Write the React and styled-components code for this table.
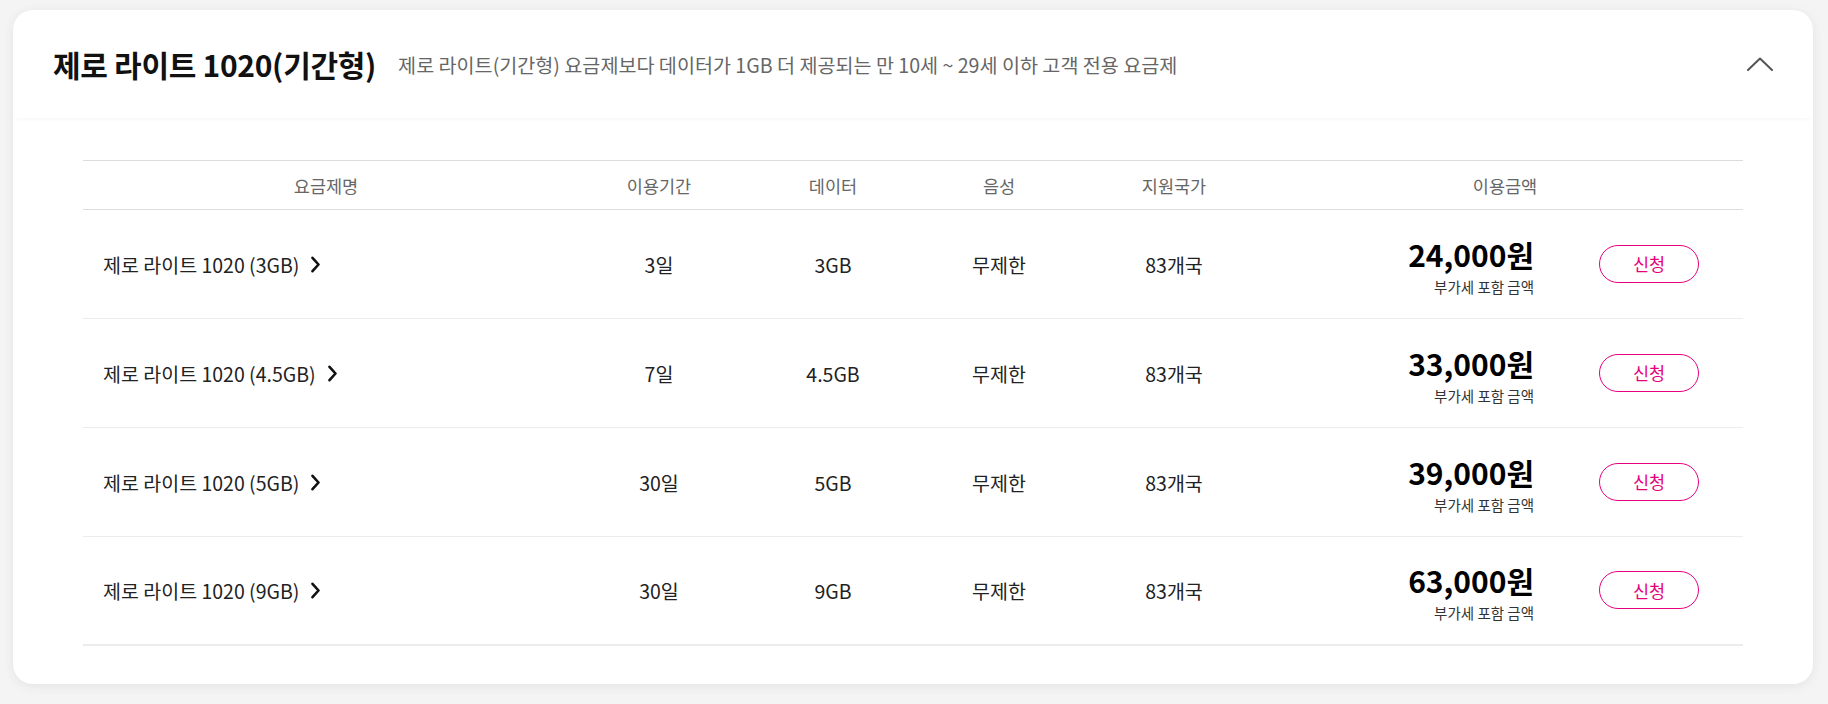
import React from "react";
import styled, { createGlobalStyle } from "styled-components";

const GlobalStyle = createGlobalStyle`
  html, body {
    margin: 0;
    padding: 0;
    background: #f4f4f4;
    font-family: "Noto Sans CJK KR", "Noto Sans", sans-serif;
  }
  * {
    box-sizing: border-box;
  }
`;

const Page = styled.div`
  padding: 10px 15px 18px 13px;
`;

const Card = styled.section`
  background: #ffffff;
  border-radius: 20px;
  box-shadow: 0 2px 12px rgba(0, 0, 0, 0.07);
  overflow: hidden;
`;

const Header = styled.div`
  display: flex;
  align-items: center;
  height: 108px;
  padding: 0 40px;
  box-shadow: 0 3px 6px -3px rgba(0, 0, 0, 0.06);
`;

const Title = styled.h2`
  margin: 0;
  font-size: 30px;
  font-weight: 700;
  color: #111;
  letter-spacing: -0.3px;
`;

const Desc = styled.p`
  margin: 0 0 0 22px;
  font-size: 19.6px;
  color: #666;
  flex: 1;
`;

const ToggleButton = styled.button`
  display: flex;
  align-items: center;
  justify-content: center;
  width: 26px;
  height: 26px;
  padding: 0;
  border: none;
  background: none;
  cursor: pointer;
`;

const Body = styled.div`
  padding: 42px 70px 38px;
`;

const Table = styled.div`
  border-top: 1px solid #dcdcdc;
  border-bottom: 2px solid #ececec;
`;

const Row = styled.div`
  display: grid;
  grid-template-columns: 486px 180px 168px 164px 186px 1fr;
  align-items: center;
  height: ${(p) => (p.$head ? "49px" : "109px")};
  border-bottom: ${(p) => (p.$head ? "1px solid #dcdcdc" : "1px solid #ececec")};

  &:last-child {
    height: 107px;
    border-bottom: none;
  }
`;

const HeadCell = styled.div`
  text-align: center;
  font-size: 17.5px;
  color: #666;
`;

const Cell = styled.div`
  text-align: center;
  font-size: 19.5px;
  color: #222;
`;

const NameCell = styled.div`
  display: flex;
  align-items: center;
  gap: 11px;
  padding-left: 20px;
  font-size: 19.5px;
  color: #222;
  cursor: pointer;
`;

const PriceCell = styled.div`
  display: flex;
  align-items: center;
  justify-content: flex-end;
  gap: 65px;
  padding-right: 44px;
`;

const PriceBlock = styled.div`
  display: flex;
  flex-direction: column;
  align-items: flex-end;
  gap: 7px;
  padding-top: 5px;
`;

const Price = styled.strong`
  font-size: 30px;
  font-weight: 700;
  color: #000;
  line-height: 1.1;
`;

const VatNote = styled.span`
  font-size: 14.5px;
  color: #333;
  line-height: 1.2;
`;

const ApplyButton = styled.button`
  width: 100px;
  height: 38px;
  border: 1px solid #e6007e;
  border-radius: 19px;
  background: #fff;
  color: #e6007e;
  font-family: inherit;
  font-size: 17.5px;
  cursor: pointer;
`;

const plans = [
  { name: "제로 라이트 1020 (3GB)", period: "3일", data: "3GB", price: "24,000원" },
  { name: "제로 라이트 1020 (4.5GB)", period: "7일", data: "4.5GB", price: "33,000원" },
  { name: "제로 라이트 1020 (5GB)", period: "30일", data: "5GB", price: "39,000원" },
  { name: "제로 라이트 1020 (9GB)", period: "30일", data: "9GB", price: "63,000원" },
];

const ChevronUp = () => (
  <svg width="26" height="14" viewBox="0 0 26 14" fill="none">
    <polyline points="1,13 13,1.5 25,13" stroke="#555" strokeWidth="2" strokeLinecap="round" strokeLinejoin="round" />
  </svg>
);

const ChevronRight = () => (
  <svg width="11" height="17" viewBox="0 0 11 17" fill="none">
    <polyline points="2.5,1.8 8.5,8.5 2.5,15.2" stroke="#111" strokeWidth="2.6" strokeLinecap="round" strokeLinejoin="round" />
  </svg>
);

const App = () => {
  return (
    <Page>
      <GlobalStyle />
      <Card>
        <Header>
          <Title>제로 라이트 1020(기간형)</Title>
          <Desc>제로 라이트(기간형) 요금제보다 데이터가 1GB 더 제공되는 만 10세 ~ 29세 이하 고객 전용 요금제</Desc>
          <ToggleButton aria-label="접기">
            <ChevronUp />
          </ToggleButton>
        </Header>
        <Body>
          <Table>
            <Row $head>
              <HeadCell>요금제명</HeadCell>
              <HeadCell>이용기간</HeadCell>
              <HeadCell>데이터</HeadCell>
              <HeadCell>음성</HeadCell>
              <HeadCell>지원국가</HeadCell>
              <HeadCell>이용금액</HeadCell>
            </Row>
            {plans.map((plan) => (
              <Row key={plan.name}>
                <NameCell>
                  {plan.name}
                  <ChevronRight />
                </NameCell>
                <Cell>{plan.period}</Cell>
                <Cell>{plan.data}</Cell>
                <Cell>무제한</Cell>
                <Cell>83개국</Cell>
                <PriceCell>
                  <PriceBlock>
                    <Price>{plan.price}</Price>
                    <VatNote>부가세 포함 금액</VatNote>
                  </PriceBlock>
                  <ApplyButton>신청</ApplyButton>
                </PriceCell>
              </Row>
            ))}
          </Table>
        </Body>
      </Card>
    </Page>
  );
};

export default App;
